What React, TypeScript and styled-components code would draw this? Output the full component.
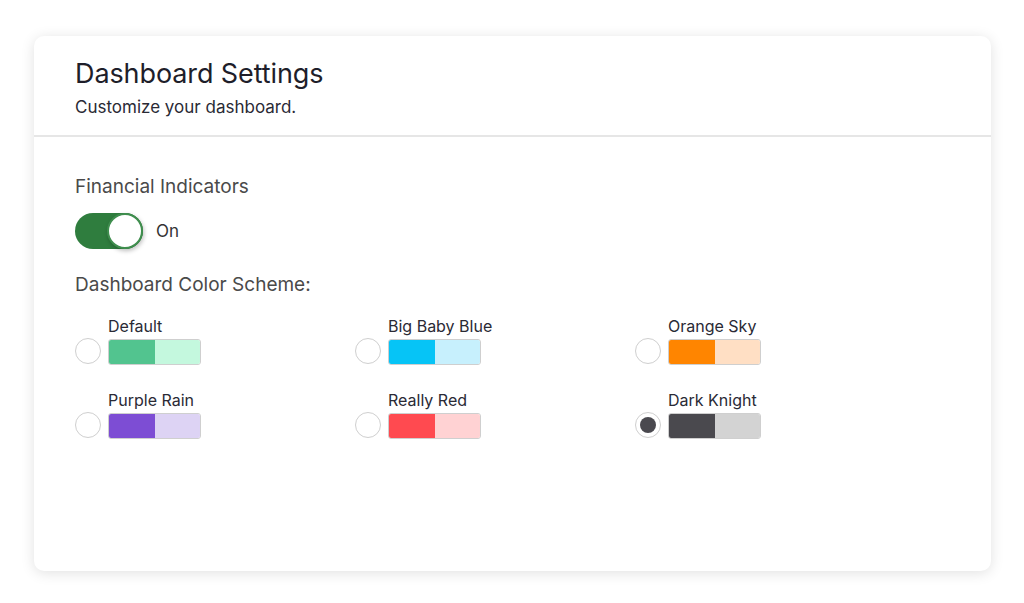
import React from "react";
import styled, { createGlobalStyle } from "styled-components";

const Global = createGlobalStyle`
  html, body { margin: 0; padding: 0; background: #ffffff; }
  body { font-family: "Inter", "Lato", sans-serif; color: #333; }
`;

const Page = styled.div`
  padding: 36px 33px 32px 34px;
  width: 1024px;
  height: 603px;
  box-sizing: border-box;
`;

const Card = styled.div`
  height: 535px;
  background: #fff;
  border-radius: 10px;
  box-shadow: 0 2px 14px rgba(0, 0, 0, 0.12);
  display: flex;
  flex-direction: column;
`;

const Header = styled.div`
  padding: 20px 41px 17px;
  border-bottom: 2px solid #e6e6e6;
`;

const Title = styled.h1`
  margin: 0;
  font-size: 27px;
  font-weight: 400;
  line-height: 36px;
  color: #1e1e2a;
  letter-spacing: -0.1px;
`;

const Subtitle = styled.p`
  margin: 4px 0 0;
  font-size: 17px;
  line-height: 22px;
  color: #2a2a35;
`;

const Body = styled.div`
  padding: 38px 41px;
  display: flex;
  flex-direction: column;
`;

const SectionLabel = styled.div`
  font-size: 19px;
  line-height: 24px;
  color: #4a4a4a;
`;

const ToggleRow = styled.div`
  display: flex;
  align-items: center;
  gap: 13px;
  margin-top: 14px;
  margin-bottom: 24px;
`;

const Track = styled.div<{ $on: boolean }>`
  width: 68px;
  height: 36px;
  border-radius: 18px;
  background: ${(p) => (p.$on ? "#2f7d3e" : "#ccc")};
  position: relative;
  box-sizing: border-box;
`;

const Knob = styled.div<{ $on: boolean }>`
  position: absolute;
  top: 0;
  left: ${(p) => (p.$on ? "32px" : "0")};
  width: 36px;
  height: 36px;
  border-radius: 50%;
  background: #fff;
  border: 2px solid #3f8e4e;
  box-sizing: border-box;
  box-shadow: 1px 2px 4px rgba(0, 0, 0, 0.25);
`;

const ToggleText = styled.span`
  font-size: 17px;
  color: #333;
`;

const Grid = styled.div`
  display: grid;
  grid-template-columns: 280px 280px 280px;
  row-gap: 24px;
  margin-top: 18px;
`;

const Option = styled.div`
  display: flex;
  align-items: flex-end;
  gap: 7px;
`;

const Radio = styled.div<{ $checked: boolean }>`
  width: 26px;
  height: 26px;
  border-radius: 50%;
  border: 1.5px solid #cfcfcf;
  box-sizing: border-box;
  display: flex;
  align-items: center;
  justify-content: center;
  margin-bottom: 1px;
  &::after {
    content: "";
    width: 16px;
    height: 16px;
    border-radius: 50%;
    background: #4a494f;
    display: ${(p) => (p.$checked ? "block" : "none")};
  }
`;

const OptionText = styled.div`
  display: flex;
  flex-direction: column;
`;

const OptionLabel = styled.div`
  font-size: 16px;
  line-height: 22px;
  color: #2a2a35;
  margin-bottom: 2px;
`;

const Swatch = styled.div`
  width: 93px;
  height: 26px;
  border: 1px solid #cfcfcf;
  border-radius: 3px;
  box-sizing: border-box;
  display: flex;
  overflow: hidden;
`;

const Half = styled.div<{ $color: string }>`
  flex: 1;
  background: ${(p) => p.$color};
`;

const schemes = [
  { name: "Default", a: "#52c48f", b: "#c4f8de" },
  { name: "Big Baby Blue", a: "#06c4f6", b: "#c7f0fd" },
  { name: "Orange Sky", a: "#ff8500", b: "#ffdfc4" },
  { name: "Purple Rain", a: "#7d4dd4", b: "#ddd3f4" },
  { name: "Really Red", a: "#ff4a50", b: "#ffd2d3" },
  { name: "Dark Knight", a: "#4a494e", b: "#d3d3d3" },
];

export default function App() {
  const selected = "Dark Knight";
  return (
    <>
      <Global />
      <Page>
        <Card>
          <Header>
            <Title>Dashboard Settings</Title>
            <Subtitle>Customize your dashboard.</Subtitle>
          </Header>
          <Body>
            <SectionLabel>Financial Indicators</SectionLabel>
            <ToggleRow>
              <Track $on>
                <Knob $on />
              </Track>
              <ToggleText>On</ToggleText>
            </ToggleRow>
            <SectionLabel>Dashboard Color Scheme:</SectionLabel>
            <Grid>
              {schemes.map((s) => (
                <Option key={s.name}>
                  <Radio $checked={s.name === selected} />
                  <OptionText>
                    <OptionLabel>{s.name}</OptionLabel>
                    <Swatch>
                      <Half $color={s.a} />
                      <Half $color={s.b} />
                    </Swatch>
                  </OptionText>
                </Option>
              ))}
            </Grid>
          </Body>
        </Card>
      </Page>
    </>
  );
}
